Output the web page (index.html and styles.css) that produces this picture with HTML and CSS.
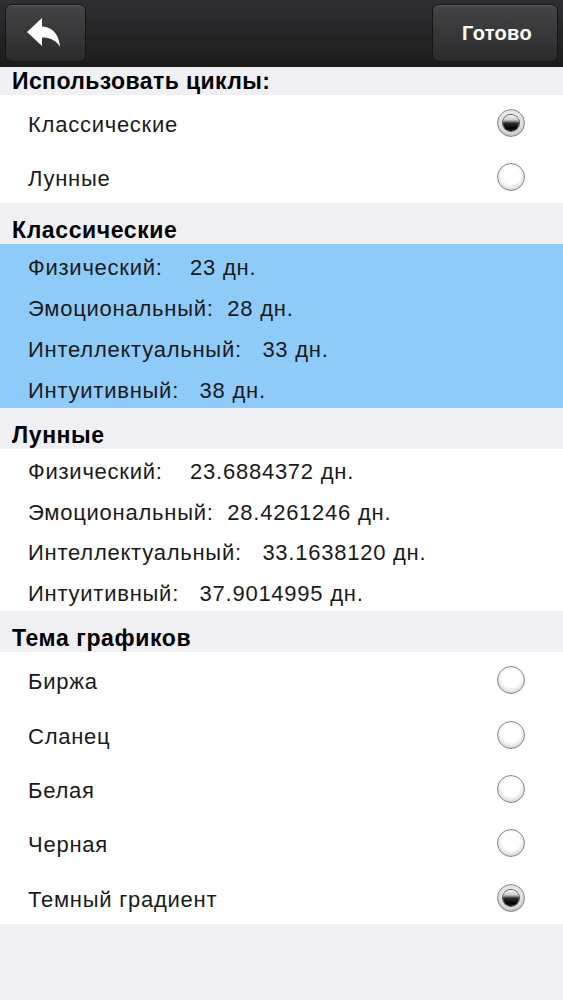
FILE: index.html
```html
<!DOCTYPE html>
<html lang="ru">
<head>
    <meta charset="UTF-8">
    <meta name="viewport" content="width=device-width, initial-scale=1.0">
    <title>Настройки</title>
    <link rel="stylesheet" href="styles.css">
</head>
<body>

    <!-- Top bar -->
    <header class="navbar">
        <button class="nav-btn back-btn" aria-label="Назад">
            <svg width="34" height="30" viewBox="0 0 34 30">
                <path d="M0 14 L15 0 L15 8.5 C26 9 32 17 33 29 C29 22 23 19.5 15 19.5 L15 28 Z" fill="#fff"/>
            </svg>
        </button>
        <button class="nav-btn done-btn">Готово</button>
    </header>

    <!-- Cycle type -->
    <div class="section-title first">Использовать циклы:</div>
    <ul class="list">
        <li class="row">Классические <span class="radio checked"></span></li>
        <li class="row">Лунные <span class="radio"></span></li>
    </ul>

    <!-- Classic cycles -->
    <div class="section-title">Классические</div>
    <ul class="list compact highlighted">
        <li class="row">Физический:    23 дн.</li>
        <li class="row">Эмоциональный:  28 дн.</li>
        <li class="row">Интеллектуальный:   33 дн.</li>
        <li class="row">Интуитивный:   38 дн.</li>
    </ul>

    <!-- Lunar cycles -->
    <div class="section-title">Лунные</div>
    <ul class="list compact lunar">
        <li class="row">Физический:    23.6884372 дн.</li>
        <li class="row">Эмоциональный:  28.4261246 дн.</li>
        <li class="row">Интеллектуальный:   33.1638120 дн.</li>
        <li class="row">Интуитивный:   37.9014995 дн.</li>
    </ul>

    <!-- Chart theme -->
    <div class="section-title">Тема графиков</div>
    <ul class="list themes">
        <li class="row">Биржа <span class="radio"></span></li>
        <li class="row">Сланец <span class="radio"></span></li>
        <li class="row">Белая <span class="radio"></span></li>
        <li class="row">Черная <span class="radio"></span></li>
        <li class="row">Темный градиент <span class="radio checked"></span></li>
    </ul>

</body>
</html>
```

FILE: styles.css
```css
/* General Styles */
* {
    margin: 0;
    padding: 0;
    box-sizing: border-box;
}

body {
    font-family: "Liberation Sans", Arial, sans-serif;
    background-color: #efeff4;
    color: #111;
    min-height: 1000px;
}

/* Navigation bar */
.navbar {
    height: 67px;
    display: flex;
    justify-content: space-between;
    align-items: flex-start;
    padding: 4px 5px 0 5px;
    background: linear-gradient(#2f2f31, #1b1b1c);
}

.nav-btn {
    height: 58px;
    border: 1px solid #151515;
    border-radius: 7px;
    background: linear-gradient(#444446, #2b2b2d);
    box-shadow: inset 0 1px 0 rgba(255, 255, 255, 0.12);
    color: #fff;
    display: flex;
    align-items: center;
    justify-content: center;
}

.back-btn {
    width: 81px;
    padding-right: 4px;
}

.done-btn {
    width: 126px;
    padding-left: 4px;
    font-size: 20px;
    font-weight: bold;
    letter-spacing: 0.3px;
}

/* Section headers */
.section-title {
    height: 41px;
    display: flex;
    align-items: flex-end;
    padding: 0 12px 1px;
    font-size: 23px;
    font-weight: bold;
    letter-spacing: 0.6px;
    line-height: 26px;
    color: #000;
}

.section-title.first {
    height: 28px;
    letter-spacing: 0.4px;
}

/* Lists */
.list {
    list-style: none;
    background-color: #fff;
}

.row {
    height: 54px;
    display: flex;
    align-items: center;
    justify-content: space-between;
    padding: 6px 38px 0 28px;
    font-size: 22px;
    letter-spacing: 0.75px;
    white-space: pre;
    color: #1a1a1a;
}

.compact .row {
    height: 41px;
}

.lunar .row {
    height: 40.5px;
}

.themes .row {
    height: 54.4px;
}

.highlighted {
    background-color: #8ecbf9;
}

/* Radio buttons */
.radio {
    width: 28px;
    height: 28px;
    margin-top: -4px;
    border-radius: 50%;
    border: 1px solid #888;
    background: radial-gradient(circle at 50% 42%, #fff 0%, #fff 45%, #e2e2e2 68%, #9c9c9c 100%);
    position: relative;
}

.radio.checked {
    background: radial-gradient(circle at 50% 40%, #fafafa 0%, #ddd 60%, #888 100%);
}

.radio.checked::after {
    content: "";
    position: absolute;
    left: 5px;
    top: 5px;
    width: 16px;
    height: 16px;
    border-radius: 50%;
    background: linear-gradient(#f4f4f4 0%, #cfcfcf 30%, #2a2a2a 52%, #000 85%, #222 100%);
    box-shadow: 0 0 0 1px #555;
}
```
